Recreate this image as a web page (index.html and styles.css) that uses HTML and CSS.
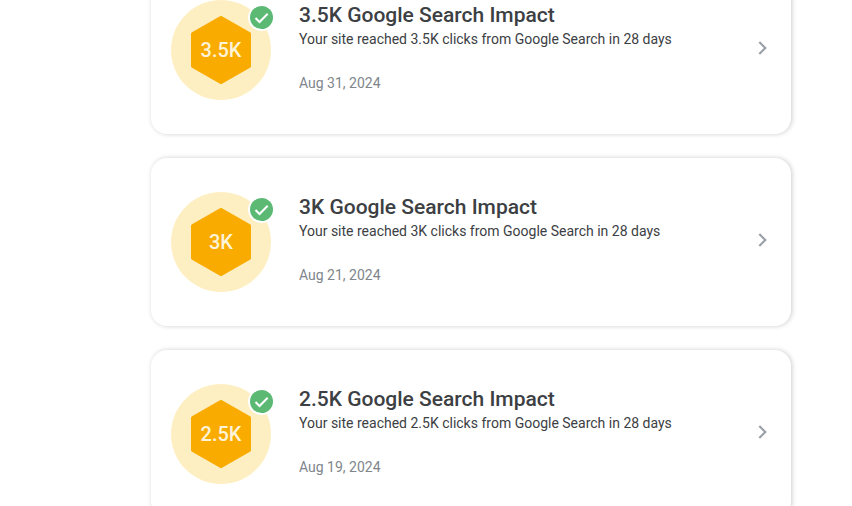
FILE: index.html
```html
<!DOCTYPE html>
<html lang="en">
<head>
    <meta charset="UTF-8">
    <meta name="viewport" content="width=device-width, initial-scale=1.0">
    <title>Achievements</title>
    <link rel="stylesheet" href="styles.css">
</head>
<body>
    <!-- shapes shared by all the cards -->
    <svg class="shapes" aria-hidden="true">
        <symbol id="badge" viewBox="0 0 100 100">
            <circle cx="50" cy="50" r="50" fill="#feefc3"/>
            <path d="M50 18L78 34V66L50 82L22 66V34Z" fill="#f9ab00" stroke="#f9ab00" stroke-width="4" stroke-linejoin="round"/>
        </symbol>
        <symbol id="check" viewBox="0 0 27 27">
            <circle cx="13.5" cy="13.5" r="13.5" fill="#fff"/>
            <circle cx="13.5" cy="13.5" r="11.5" fill="#5bb974"/>
            <path d="M7.5 14L11.5 18L19.7 9.7" fill="none" stroke="#fff" stroke-width="2"/>
        </symbol>
        <symbol id="chevron" viewBox="0 0 24 24">
            <path d="M8.3 6L14.3 12L8.3 18" fill="none" stroke="#9aa0a6" stroke-width="2.2"/>
        </symbol>
    </svg>

    <main class="list">
        <a class="card" href="#">
            <div class="badge">
                <svg class="badge-shape" aria-hidden="true"><use href="#badge"/></svg>
                <span class="badge-text">3.5K</span>
                <svg class="check" aria-hidden="true"><use href="#check"/></svg>
            </div>
            <div class="info">
                <h2 class="title">3.5K Google Search Impact</h2>
                <p class="desc">Your site reached 3.5K clicks from Google Search in 28 days</p>
                <p class="date">Aug 31, 2024</p>
            </div>
            <svg class="chevron" aria-hidden="true"><use href="#chevron"/></svg>
        </a>

        <a class="card" href="#">
            <div class="badge">
                <svg class="badge-shape" aria-hidden="true"><use href="#badge"/></svg>
                <span class="badge-text">3K</span>
                <svg class="check" aria-hidden="true"><use href="#check"/></svg>
            </div>
            <div class="info">
                <h2 class="title">3K Google Search Impact</h2>
                <p class="desc">Your site reached 3K clicks from Google Search in 28 days</p>
                <p class="date">Aug 21, 2024</p>
            </div>
            <svg class="chevron" aria-hidden="true"><use href="#chevron"/></svg>
        </a>

        <a class="card" href="#">
            <div class="badge">
                <svg class="badge-shape" aria-hidden="true"><use href="#badge"/></svg>
                <span class="badge-text">2.5K</span>
                <svg class="check" aria-hidden="true"><use href="#check"/></svg>
            </div>
            <div class="info">
                <h2 class="title">2.5K Google Search Impact</h2>
                <p class="desc">Your site reached 2.5K clicks from Google Search in 28 days</p>
                <p class="date">Aug 19, 2024</p>
            </div>
            <svg class="chevron" aria-hidden="true"><use href="#chevron"/></svg>
        </a>
    </main>
</body>
</html>
```
FILE: styles.css
```css
body {
    margin: 0;
    padding-left: 90px;
    background-color: white;
    font-family: Roboto, Arial, sans-serif;
    color: #3c4043;
    overflow: hidden;
}
.shapes {
    display: none;
}
.list {
    display: flex;
    flex-direction: column;
    gap: 24px;
    max-width: 640px;
    margin: -34px auto 0;
}
.card {
    display: flex;
    align-items: center;
    gap: 28px;
    padding: 34px 16px 34px 20px;
    border-radius: 16px;
    background-color: white;
    box-shadow: 1px 0 5px rgba(0, 0, 0, 0.2);
    color: inherit;
    text-decoration: none;
}
.badge {
    position: relative;
    display: grid;
    place-items: center;
    flex: none;
    width: 100px;
    height: 100px;
}
.badge-shape {
    grid-area: 1 / 1;
    width: 100px;
    height: 100px;
}
.badge-text {
    grid-area: 1 / 1;
    z-index: 1;
    font-size: 20px;
    font-weight: 500;
    color: #fef3d6;
}
.check {
    position: absolute;
    top: 4px;
    right: -4px;
    width: 27px;
    height: 27px;
}
.info {
    flex: 1;
    padding-bottom: 6px;
}
.title {
    margin: 0;
    font-family: "Google Sans", Roboto, sans-serif;
    font-size: 21px;
    font-weight: 500;
    line-height: 28px;
}
.desc {
    margin: 0 0 24px;
    font-size: 14px;
    line-height: 20px;
}
.date {
    margin: 0;
    font-size: 14px;
    line-height: 20px;
    color: #80868b;
}
.chevron {
    flex: none;
    width: 24px;
    height: 24px;
    padding-bottom: 4px;
}
```
